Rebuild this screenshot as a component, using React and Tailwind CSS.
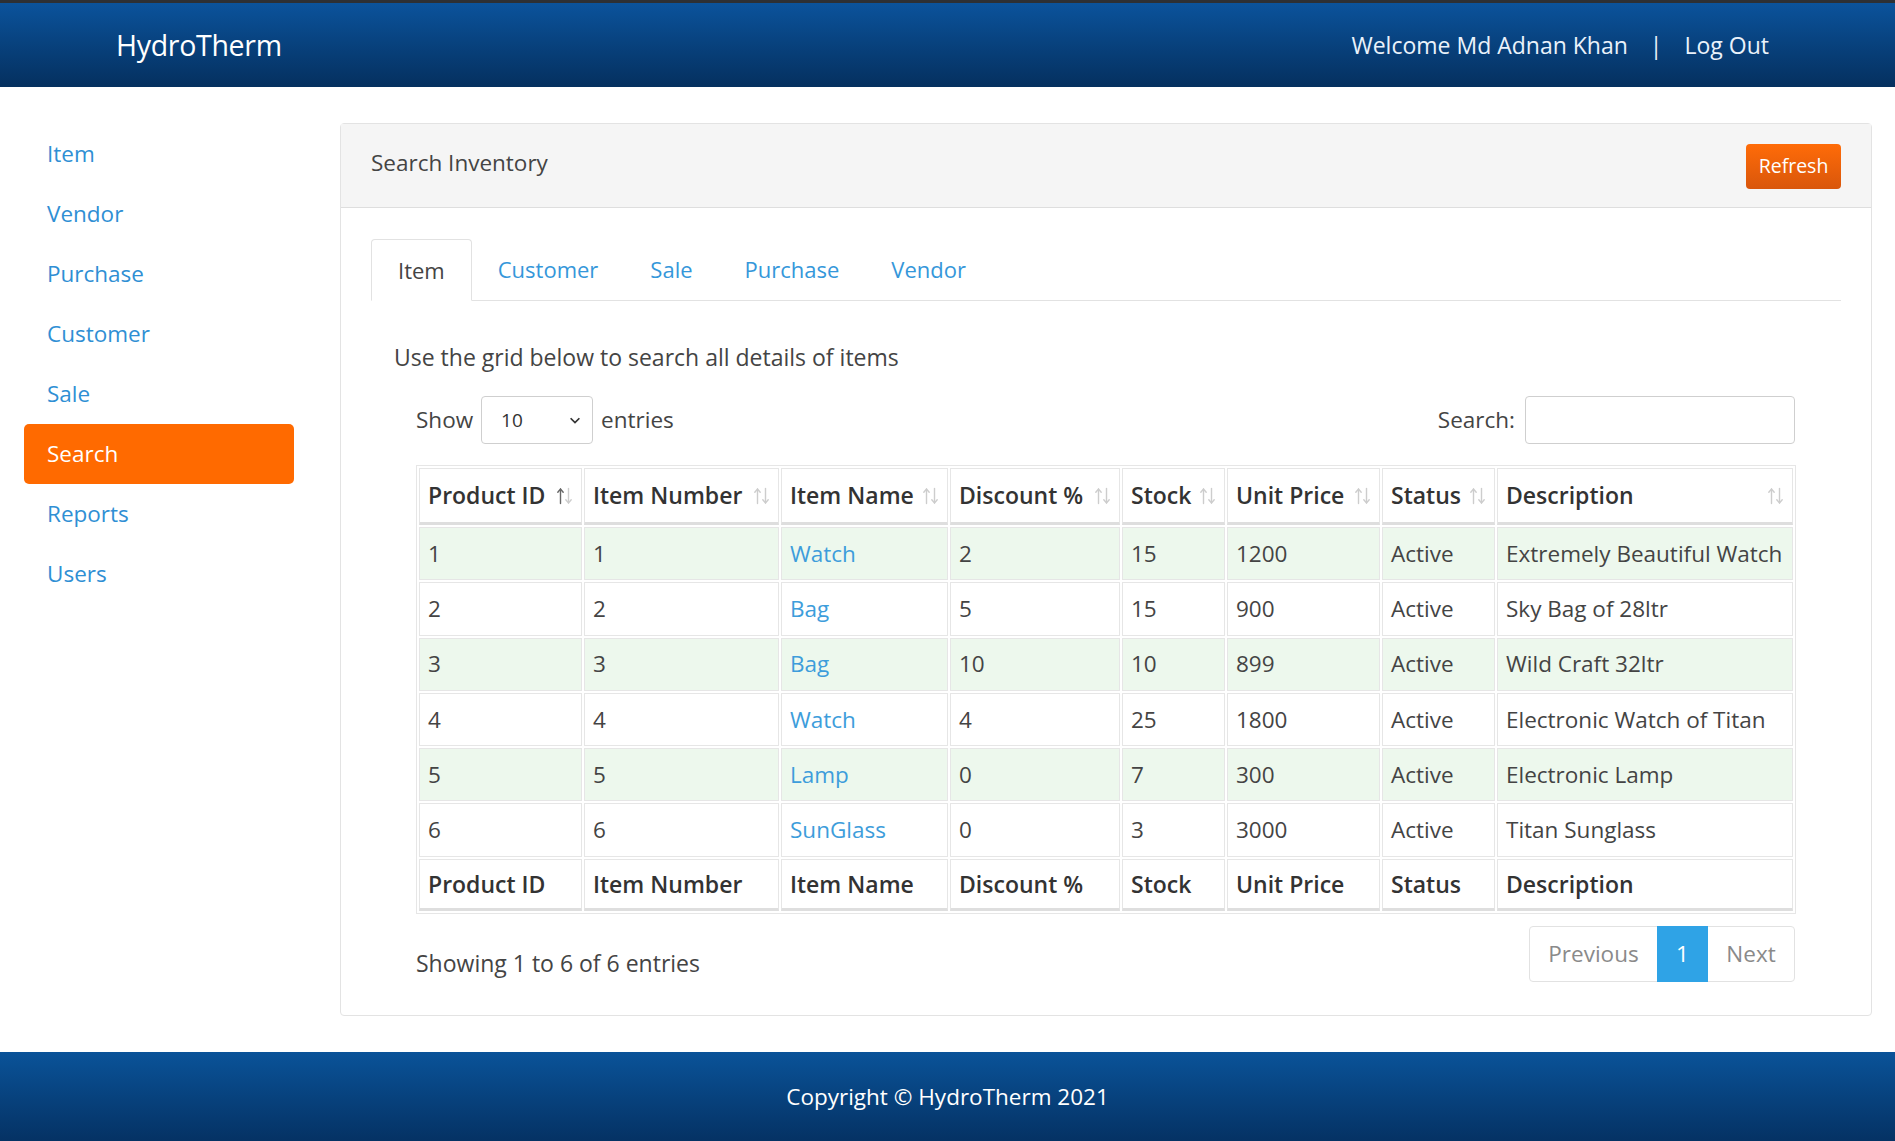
import React from "react";

const font = { fontFamily: '"Open Sans", "Noto Sans", sans-serif' };

const navItems = ["Item", "Vendor", "Purchase", "Customer", "Sale", "Search", "Reports", "Users"];
const tabs = ["Item", "Customer", "Sale", "Purchase", "Vendor"];

const cols = [
  { label: "Product ID", w: "w-[163px]" },
  { label: "Item Number", w: "w-[195px]" },
  { label: "Item Name", w: "w-[167px]" },
  { label: "Discount %", w: "w-[170px]" },
  { label: "Stock", w: "w-[103px]" },
  { label: "Unit Price", w: "w-[153px]" },
  { label: "Status", w: "w-[113px]" },
  { label: "Description", w: "w-[296px]" },
];

const rows = [
  ["1", "1", "Watch", "2", "15", "1200", "Active", "Extremely Beautiful Watch"],
  ["2", "2", "Bag", "5", "15", "900", "Active", "Sky Bag of 28ltr"],
  ["3", "3", "Bag", "10", "10", "899", "Active", "Wild Craft 32ltr"],
  ["4", "4", "Watch", "4", "25", "1800", "Active", "Electronic Watch of Titan"],
  ["5", "5", "Lamp", "0", "7", "300", "Active", "Electronic Lamp"],
  ["6", "6", "SunGlass", "0", "3", "3000", "Active", "Titan Sunglass"],
];

function SortIcon({ active }) {
  return (
    <svg
      className="absolute right-[8px] top-1/2 -translate-y-1/2"
      width="17"
      height="18"
      viewBox="0 0 17 18"
      fill="none"
      strokeWidth="1.4"
      strokeLinecap="round"
    >
      <g stroke={active ? "#666" : "#cdcdcd"}>
        <path d="M4.5 16.5V2" />
        <path d="M1.8 5.2L4.5 2L7.2 5.2" />
      </g>
      <g stroke="#cdcdcd">
        <path d="M12.5 1.5V16" />
        <path d="M9.8 12.8L12.5 16L15.2 12.8" />
      </g>
    </svg>
  );
}

export default function App() {
  return (
    <div className="min-h-[1141px] flex flex-col bg-white text-[#444]" style={font}>
      {/* Header */}
      <header className="h-[87px] border-t-[3px] border-[#2d3035] bg-gradient-to-b from-[#0b539c] to-[#05305f] flex items-center justify-between pl-[116px] pr-[126px]">
        <div className="text-white text-[28.5px] tracking-[-0.3px] mt-[1px]">HydroTherm</div>
        <div className="flex items-center text-[#eaf2fb] text-[23px] mt-[1px]">
          <span>Welcome Md Adnan Khan</span>
          <span className="mx-[22px]">|</span>
          <span>Log Out</span>
        </div>
      </header>

      {/* Body */}
      <div className="flex flex-1">
        <aside className="w-[340px] shrink-0 pt-[37px]">
          <nav className="flex flex-col">
            {navItems.map((n) => (
              <div
                key={n}
                className={
                  "ml-[24px] w-[270px] h-[60px] flex items-center pl-[23px] text-[22.5px] rounded-[5px] " +
                  (n === "Search" ? "bg-[#ff6a00] text-white" : "text-[#2f8fd4]")
                }
              >
                {n}
              </div>
            ))}
          </nav>
        </aside>

        <main className="w-[1532px] shrink-0 pt-[36px] pb-[36px]">
          <div className="border border-[#e3e3e3] rounded-[4px] h-[893px] flex flex-col">
            <div className="h-[84px] bg-[#f5f5f5] border-b border-[#dedede] flex items-center justify-between pl-[30px] pr-[30px]">
              <span className="text-[22.5px] text-[#444] -mt-[6px]">Search Inventory</span>
              <button className="h-[45px] w-[95px] rounded-[4px] bg-gradient-to-b from-[#ff6c08] to-[#d9560b] text-white text-[19.5px] mt-[1px]">
                Refresh
              </button>
            </div>

            <div className="pl-[30px] pr-[30px] pt-[31px]">
              {/* Tabs */}
              <div className="flex h-[62px] border-b border-[#e2e2e2]">
                {tabs.map((t, i) => (
                  <div
                    key={t}
                    className={
                      "px-[26px] flex items-center text-[22px] " +
                      (i === 0
                        ? "border border-[#e2e2e2] border-b-white rounded-t-[4px] bg-white -mb-px text-[#444]"
                        : "text-[#3597da]")
                    }
                  >
                    {t}
                  </div>
                ))}
              </div>

              <div className="pl-[23px] pt-[40px] text-[23px] text-[#444] leading-[32px]">
                Use the grid below to search all details of items
              </div>

              <div className="pl-[45px] pr-[46px]">
                <div className="mt-[23px] flex items-center justify-between h-[48px]">
                  <div className="flex items-center text-[22.5px]">
                    <span>Show</span>
                    <div className="relative mx-[8px] w-[112px] h-[48px] border border-[#cfcfcf] rounded-[4px] flex items-center pl-[19px] text-[19px] text-[#333]">
                      10
                      <svg className="absolute right-[10px] top-1/2 -translate-y-1/2" width="14" height="14" viewBox="0 0 16 16">
                        <path d="M3 6l5 5 5-5" fill="none" stroke="#333" strokeWidth="2" />
                      </svg>
                    </div>
                    <span>entries</span>
                  </div>
                  <div className="flex items-center text-[22.5px]">
                    <span className="mr-[10px]">Search:</span>
                    <div className="w-[270px] h-[48px] border border-[#cfcfcf] rounded-[4px]" />
                  </div>
                </div>

                <table className="mt-[21px] w-[1380px] table-fixed border-separate border-spacing-[2px] border border-[#e6e6e6] text-[22.5px]">
                  <thead>
                    <tr>
                      {cols.map((c, i) => (
                        <th
                          key={c.label}
                          className={c.w + " relative h-[57px] text-left text-[23px] font-semibold text-[#333] pl-[8px] border border-[#e6e6e6] border-b-[3px] border-b-[#dedede]"}
                        >
                          {c.label}
                          <SortIcon active={i === 0} />
                        </th>
                      ))}
                    </tr>
                  </thead>
                  <tbody>
                    {rows.map((r, ri) => (
                      <tr key={ri} className={ri % 2 === 0 ? "bg-[#edf8ed]" : "bg-white"}>
                        {r.map((v, ci) => (
                          <td
                            key={ci}
                            className={
                              "h-[53.3px] pl-[8px] border border-[#e6e6e6] whitespace-nowrap overflow-hidden " +
                              (ci === 2 ? "text-[#3d9ddb]" : "text-[#444]")
                            }
                          >
                            {v}
                          </td>
                        ))}
                      </tr>
                    ))}
                  </tbody>
                  <tfoot>
                    <tr>
                      {cols.map((c) => (
                        <th
                          key={c.label}
                          className="h-[52px] text-left text-[23px] font-semibold text-[#333] pl-[8px] border border-[#e6e6e6] border-b-[3px] border-b-[#dedede]"
                        >
                          {c.label}
                        </th>
                      ))}
                    </tr>
                  </tfoot>
                </table>

                <div className="mt-[12px] flex items-start justify-between">
                  <div className="pt-[20px] text-[23px] text-[#444]">Showing 1 to 6 of 6 entries</div>
                  <div className="flex h-[56px] border border-[#e2e2e2] rounded-[4px] text-[22.5px]">
                    <div className="w-[127px] flex items-center justify-center text-[#8a8a8a]">Previous</div>
                    <div className="w-[51px] flex items-center justify-center bg-[#2fa3e6] text-white -my-px">1</div>
                    <div className="w-[86px] flex items-center justify-center text-[#8a8a8a]">Next</div>
                  </div>
                </div>
              </div>
            </div>
          </div>
        </main>
      </div>

      {/* Footer */}
      <footer className="h-[89px] bg-gradient-to-b from-[#0a5399] to-[#053264] flex items-center justify-center text-white text-[22.5px]">
        Copyright © HydroTherm 2021
      </footer>
    </div>
  );
}
